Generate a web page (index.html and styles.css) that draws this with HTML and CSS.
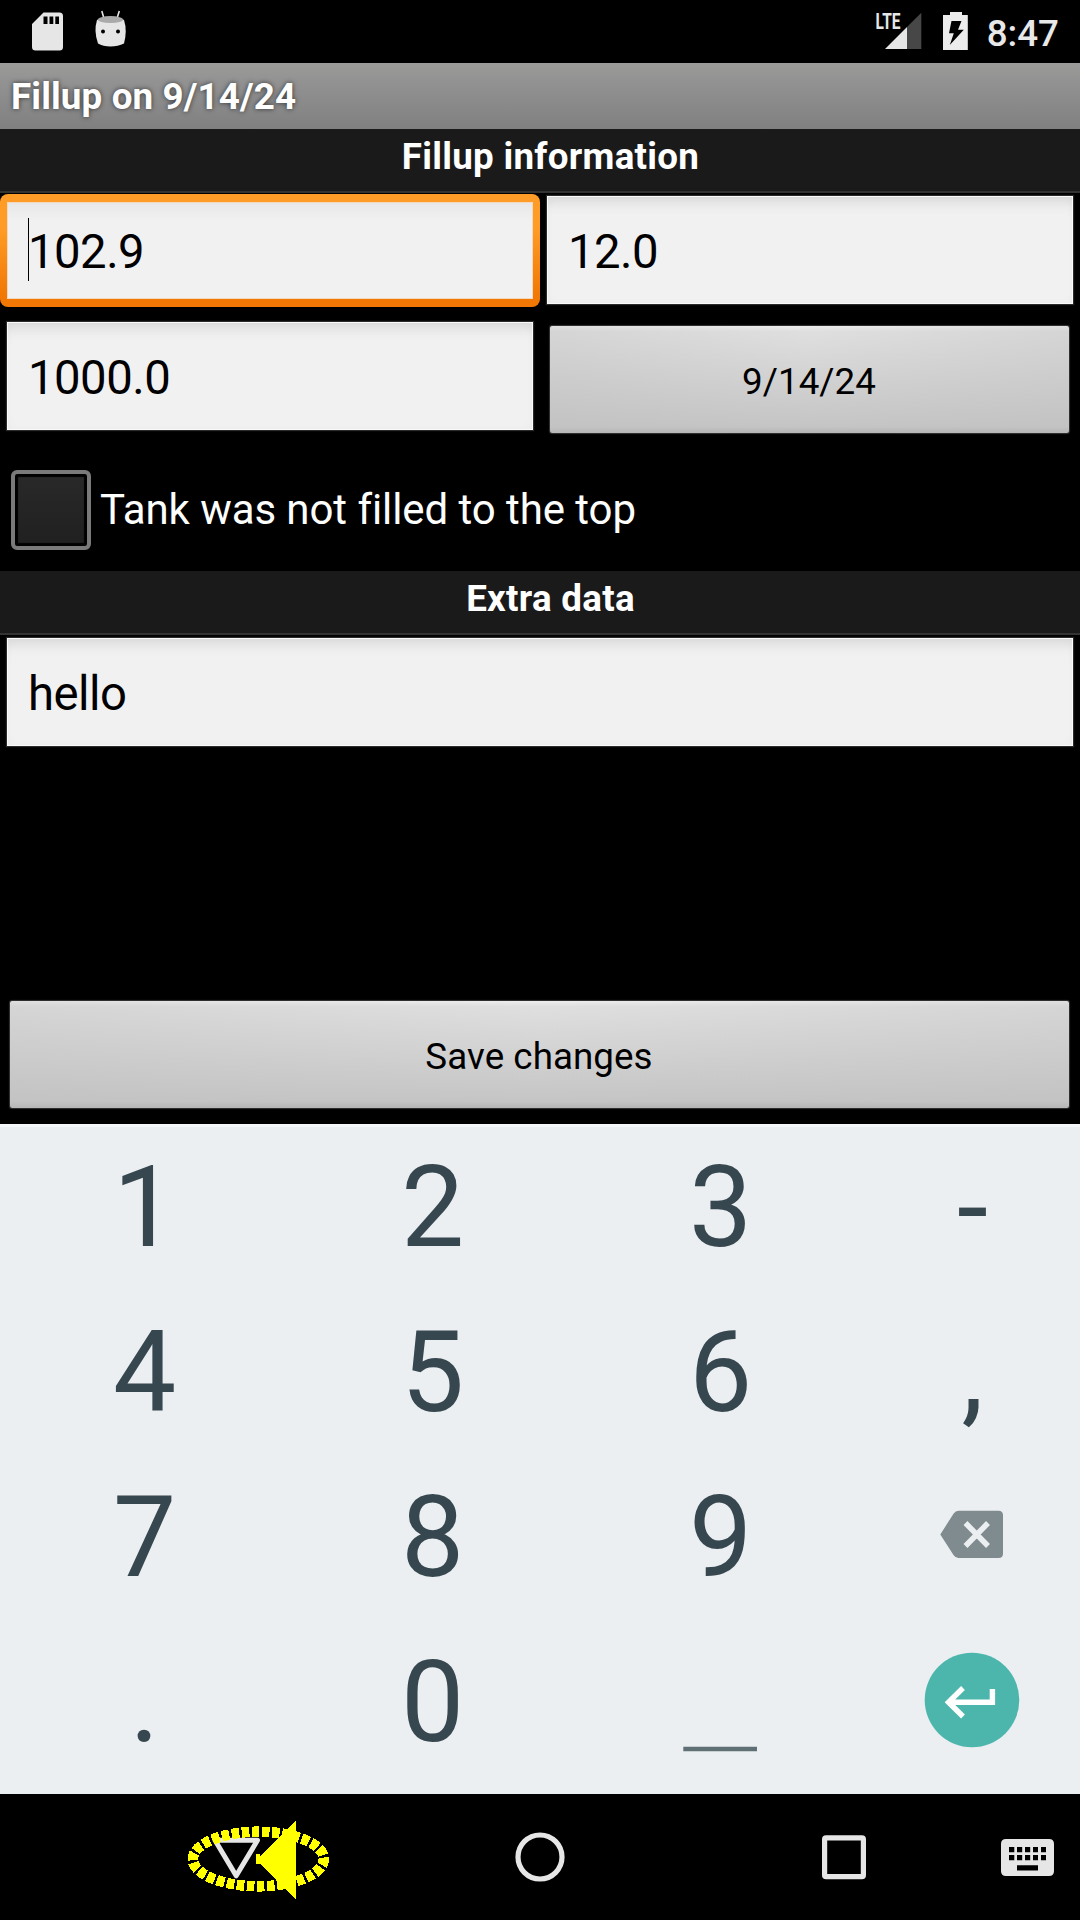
FILE: index.html
```html
<!DOCTYPE html>
<html lang="en">
<head>
<meta charset="utf-8">
<title>Fillup on 9/14/24</title>
<link rel="stylesheet" href="styles.css">
</head>
<body>
<div class="screen">
  <header class="status">
    <svg class="status-left" width="140" height="63" viewBox="0 0 140 63">
      <path fill="#e6e6e6" fill-rule="evenodd" d="M43.5 12.5H59.5Q63 12.500 63 16V47Q63 50.500 59.500 50.500H35.500Q32 50.500 32 47V24ZM43.500 16.500V24H47.500V16.500ZM49.500 16.500V24H53.300V16.500ZM55.300 16.500V24H59V16.500Z"/>
      <path fill="none" stroke="#e6e6e6" stroke-width="1.600" d="M101.800 11L104 18.500M119.300 11L117 18.500"/>
      <path fill="#e6e6e6" d="M97 20Q110.500 14 124 20Q127.500 31 124 43.500Q118 46.500 110.500 46.500Q103 46.500 98 43.500Q93.500 31 97 20Z"/>
      <ellipse cx="110.500" cy="19.600" rx="12.800" ry="3.500" fill="#aaa"/>
      <circle cx="103" cy="31.500" r="2"/><circle cx="118" cy="31.500" r="2"/>
    </svg>
    <div class="status-right">
      <svg width="98" height="63" viewBox="873 0 98 63">
        <text class="lte" x="875.500" y="29" textLength="25" lengthAdjust="spacingAndGlyphs">LTE</text>
        <path fill="#474747" d="M907 27L921.300 12.700V49H907Z"/>
        <path fill="#e6e6e6" d="M885 49L907 27V49Z"/>
        <path fill="#ececec" fill-rule="evenodd" d="M950 12H962V15H967.800V50H943V15H950ZM951.500 21L949 33.300H953.800L949.800 45L963.800 29.800H958L961.500 21Z"/>
      </svg>
      <span class="clock">8:47</span>
    </div>
  </header>
  <div class="titlebar">Fillup on 9/14/24</div>

  <main class="form">
    <h2 class="section">Fillup information</h2>
    <div class="row row-first">
      <div class="field field-focused"><i class="caret"></i>102.9</div>
      <div class="field">12.0</div>
    </div>
    <div class="row row-second">
      <div class="field">1000.0</div>
      <div class="button button-date">9/14/24</div>
    </div>
    <div class="check"><i class="box"></i><span>Tank was not filled to the top</span></div>
    <h2 class="section">Extra data</h2>
    <div class="field">hello</div>
    <div class="button button-save">Save changes</div>
  </main>

  <div class="keypad">
    <span>1</span><span>2</span><span>3</span><span>-</span>
    <span>4</span><span>5</span><span>6</span><span>,</span>
    <span>7</span><span>8</span><span>9</span>
    <span><svg width="216" height="165" viewBox="864 1454 216 165">
      <path fill="#808b8f" d="M956.500 1510.800H998.500Q1003 1510.800 1003 1515.300V1553.500Q1003 1558 998.500 1558H958.500Q955.500 1558 953.500 1555L940.300 1534.400L953.500 1513.800Q955.500 1510.800 958.500 1510.800Z"/>
      <path stroke="#ebeff2" stroke-width="5.500" d="M965.500 1523L988 1546M988 1523L965.500 1546"/>
    </svg></span>
    <span>.</span><span>0</span>
    <span><svg width="288" height="165" viewBox="576 1619 288 165"><path fill="#5e7074" d="M683.300 1746.700H757V1751.200H683.300Z"/></svg></span>
    <span><svg width="216" height="165" viewBox="864 1619 216 165">
      <circle cx="972" cy="1700" r="47.300" fill="#4db6ac"/>
      <path fill="none" stroke="#fff" stroke-width="5.400" d="M992.400 1689V1702.200H950M963 1688L948.500 1702.200L963 1716.500"/>
    </svg></span>
  </div>

  <nav class="navbar">
    <svg width="1080" height="126" viewBox="0 1794 1080 126">
      <g fill="none" stroke="#e6e6e6">
        <path stroke-width="5" stroke-linejoin="round" d="M215 1840.300H257.500L236.200 1875.800Z"/>
        <circle cx="540" cy="1857" r="22" stroke-width="5.200"/>
        <rect x="824.600" y="1837.900" width="38.800" height="38.800" rx="1.500" stroke-width="5.200"/>
      </g>
      <path fill="#e6e6e6" fill-rule="evenodd" d="M1006 1839H1049Q1054 1839 1054 1844V1871Q1054 1876 1049 1876H1006Q1001 1876 1001 1871V1844Q1001 1839 1006 1839ZM1009 1847V1852.300H1014.300V1847ZM1017 1847V1852.300H1022.200V1847ZM1025 1847V1852.300H1030.200V1847ZM1033 1847V1852.300H1038V1847ZM1041 1847V1852.300H1046V1847ZM1009 1855V1860.300H1014.300V1855ZM1017 1855V1860.300H1022.200V1855ZM1025 1855V1860.300H1030.200V1855ZM1033 1855V1860.300H1038V1855ZM1041 1855V1860.300H1046V1855ZM1017 1865.300V1870.500H1038V1865.300Z"/>
      <g shape-rendering="crispEdges">
        <ellipse cx="258.300" cy="1859" rx="65.500" ry="27.300" fill="none" stroke="#ff0" stroke-width="10.500" stroke-dasharray="7.600 2.500" stroke-dashoffset="1"/>
        <path fill="#ff0" d="M256 1854H259.500V1856.500L296 1820V1899L259.500 1863.500H256Z"/>
      </g>
    </svg>
  </nav>
</div>
</body>
</html>
```
FILE: styles.css
```css
* { box-sizing: border-box; }
body { margin: 0; background: #000; font-family: Roboto, sans-serif; }
svg { display: block; }
.screen { width: 1080px; height: 1920px; display: flex; flex-direction: column; background: #000; overflow: hidden; }

.status { height: 63px; flex: none; display: flex; justify-content: space-between; }
.status-right { display: flex; padding-right: 21px; gap: 16px; }
.lte { font-family: Roboto, sans-serif; font-size: 22px; font-weight: 700; fill: #e6e6e6; }
.clock { color: #e8e8e8; font-size: 36.75px; font-weight: 500; line-height: 67px; }

.titlebar {
  height: 66px; flex: none; padding: 0 11px; color: #fff;
  font-size: 36.75px; font-weight: 700; line-height: 67px; letter-spacing: .13px;
  background: linear-gradient(#9b9b99, #939393 25%, #808080);
  text-shadow: 0 0 5px rgba(0, 0, 0, .65);
}

.form { height: 995px; flex: none; display: flex; flex-direction: column; }
.section {
  margin: 0; height: 64px; flex: none; padding-left: 21px; background: #1a1a1a;
  border-bottom: 2px solid #333; color: #fff; text-align: center;
  font-size: 36.75px; font-weight: 700; line-height: 55px; letter-spacing: .28px;
}
.row { display: grid; grid-template-columns: 1fr 1fr; align-items: start; flex: none; }
.row-first { height: 126px; }
.row-second { height: 151px; }
.field {
  height: 108px; flex: none; margin: 3px 7px 0; padding: 4px 21px 0;
  font-size: 47.25px; line-height: 105px; letter-spacing: -.5px; color: #000; background: #f1f1f1;
  box-shadow: 0 0 1px 1px #2a2a2a, inset 0 0 0 1px #fafafa, inset 0 14px 14px -8px rgba(0, 0, 0, .1), inset 0 0 10px rgba(0, 0, 0, .03);
}
.field-focused {
  position: relative; height: 113px; margin: 1px 0 0; padding-top: 0; line-height: 101px;
  border: 7px solid transparent; border-top-width: 8px; border-bottom-width: 8px; border-radius: 8px;
  background: linear-gradient(#e7e7e7, #f1f1f1 20%) padding-box, linear-gradient(#ff9c27 30%, #f17805 90%) border-box;
  box-shadow: inset 0 0 0 1px #f3d9bd;
}
.caret { position: absolute; left: 21px; top: 16px; width: 1px; height: 63px; background: #000; }
.button {
  height: 107px; flex: none; padding-right: 1px; text-align: center; color: #000; font-size: 36.75px; line-height: 111px; letter-spacing: .06px; border-radius: 2px;
  background:
    linear-gradient(90deg, rgba(190, 190, 190, .3), rgba(190, 190, 190, 0) 50%, rgba(190, 190, 190, .3)),
    linear-gradient(#eee, #dfdfdf 5%, #c5c5c5 94%, #b4b4b4);
  box-shadow: 0 0 1px 1px #333;
}
.button-date { margin: 7px 11px 0 10px; }
.button-save { margin: 255px 11px 0 10px; }
.check { height: 101px; flex: none; display: flex; gap: 9px; padding-left: 11px; color: #fff; font-size: 42px; line-height: 79px; letter-spacing: -.07px; }
.box {
  width: 80px; height: 80px; border: 4px solid #7a7a7a; border-radius: 6px;
  background: linear-gradient(#292929, #202020); box-shadow: inset 0 0 1px 3px #000;
}

.keypad {
  height: 670px; flex: none; display: grid; grid-template: repeat(4, 165px) / 288px 288px 288px 216px;
  background: linear-gradient(#f5f8f9 3px, #ebeff2 3px);
}
.keypad span { text-align: center; color: #37474f; font-size: 112.5px; line-height: 167px; padding-left: 1px; }
.keypad svg { margin-left: -1px; }
.navbar { height: 126px; flex: none; }
```
